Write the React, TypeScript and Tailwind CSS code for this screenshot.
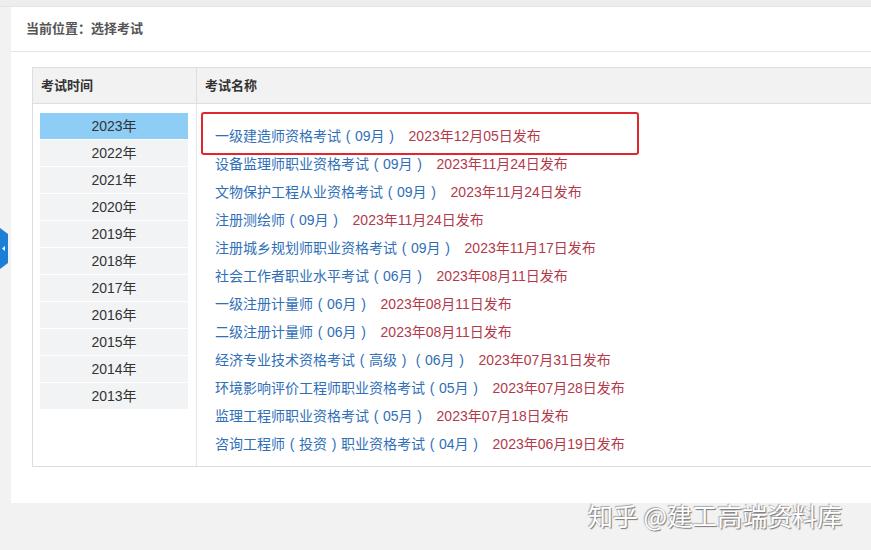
const years = ["2023", "2022", "2021", "2020", "2019", "2018", "2017", "2016", "2015", "2014", "2013"]

const exams: { name: string; date: string }[] = [
  { name: "一级建造师资格考试（09月）", date: "2023年12月05日发布" },
  { name: "设备监理师职业资格考试（09月）", date: "2023年11月24日发布" },
  { name: "文物保护工程从业资格考试（09月）", date: "2023年11月24日发布" },
  { name: "注册测绘师（09月）", date: "2023年11月24日发布" },
  { name: "注册城乡规划师职业资格考试（09月）", date: "2023年11月17日发布" },
  { name: "社会工作者职业水平考试（06月）", date: "2023年08月11日发布" },
  { name: "一级注册计量师（06月）", date: "2023年08月11日发布" },
  { name: "二级注册计量师（06月）", date: "2023年08月11日发布" },
  { name: "经济专业技术资格考试（高级）（06月）", date: "2023年07月31日发布" },
  { name: "环境影响评价工程师职业资格考试（05月）", date: "2023年07月28日发布" },
  { name: "监理工程师职业资格考试（05月）", date: "2023年07月18日发布" },
  { name: "咨询工程师（投资）职业资格考试（04月）", date: "2023年06月19日发布" },
]

// full-width brackets drawn centred in a 1em box, like the original font does
function ExamName({ text }: { text: string }) {
  const parts = text.split(/([（）])/)
  return (
    <>
      {parts.map((p, i) =>
        p === "（" || p === "）" ? (
          <span key={i} className="inline-block w-[14px] text-center">
            {p === "（" ? "(" : ")"}
          </span>
        ) : (
          <span key={i}>{p}</span>
        )
      )}
    </>
  )
}

export default function App() {
  return (
    <div className="relative h-[550px] w-[871px] overflow-hidden bg-[#f2f2f2] font-['Liberation_Sans','Noto_Sans_CJK_SC',sans-serif]">
      <div className="h-[7px] border-b border-[#e4e4e4] bg-[#ededed]" />

      <div className="ml-[11px] w-[900px] bg-white pb-[36px]">
        <div className="flex h-[45px] items-center border-b border-[#e6e6e6] pl-[15px] text-[13px] font-bold text-[#555]">
          当前位置：选择考试
        </div>

        <div className="ml-[21px] mt-[15px] w-[860px] border border-[#dedede]">
          <div className="flex h-[36px] border-b border-[#dedede] bg-[#f2f2f2] text-[13px] font-bold text-[#333]">
            <div className="flex w-[164px] items-center border-r border-[#dedede] pl-[8px]">考试时间</div>
            <div className="flex items-center pl-[8px]">考试名称</div>
          </div>

          <div className="flex">
            <div className="w-[164px] border-r border-[#e6e6e6] pb-[10px] pl-[7px] pr-[8px] pt-[9px]">
              <ul className="flex flex-col gap-px">
                {years.map((y, i) => (
                  <li
                    key={y}
                    className={
                      i === 0
                        ? "flex h-[26px] items-center justify-center bg-[#8dcdf6] text-[14px] text-[#333]"
                        : "flex h-[26px] items-center justify-center bg-[#f2f3f5] text-[14px] text-[#333]"
                    }
                  >
                    {y}年
                  </li>
                ))}
              </ul>
            </div>

            <div className="relative flex-1 pb-[8px] pl-[18px] pt-[18px]">
              <ul>
                {exams.map((e) => (
                  <li key={e.name + e.date} className="flex h-[28px] items-center text-[14px]">
                    <a href="#" className="text-[#2f6fb8]">
                      <ExamName text={e.name} />
                    </a>
                    <span className="ml-[10px] text-[#b23a4a]">{e.date}</span>
                  </li>
                ))}
              </ul>
              <div className="absolute left-[4px] top-[8px] h-[43px] w-[438px] rounded-[3px] border-2 border-[#e3262b]" />
            </div>
          </div>
        </div>
      </div>

      <div className="absolute left-0 top-[228px]">
        <svg width="9" height="41" viewBox="0 0 9 41">
          <path d="M0 0 L8 6 L8 35 L0 41 Z" fill="#1b7fd8" />
          <path d="M2 20.5 L5 18 L5 23 Z" fill="#fff" />
        </svg>
      </div>

      <div className="absolute left-[588px] top-[497px] font-['Noto_Sans_CJK_SC',sans-serif] text-[25px] text-white [text-shadow:1px_1px_1px_#777,-1px_-1px_1px_#aaa]">
        知乎 @建工高端资料库
      </div>
    </div>
  )
}
